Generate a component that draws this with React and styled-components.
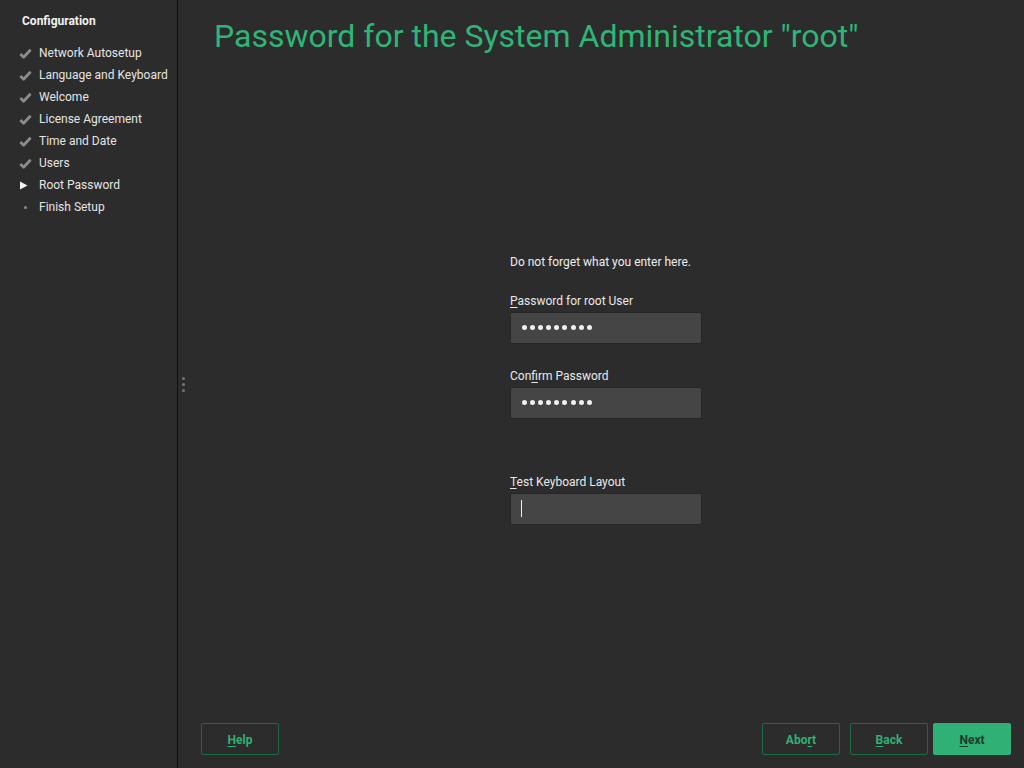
import React from "react";
import styled, { createGlobalStyle } from "styled-components";

const Global = createGlobalStyle`
  html, body { margin: 0; padding: 0; background: #2c2c2c; }
  body { font-family: Roboto, "Liberation Sans", sans-serif; color: #e6e6e6; }
  * { box-sizing: border-box; }
`;

const Shell = styled.div`
  display: flex;
  width: 1024px;
  height: 768px;
  background: #2c2c2c;
  overflow: hidden;
`;

const Sidebar = styled.nav`
  width: 178px;
  flex: none;
  border-right: 1px solid #0f0f0f;
  padding: 13px 0 0 0;
`;

const SideTitle = styled.div`
  font-size: 12px;
  font-weight: 700;
  color: #f2f2f2;
  padding-left: 22px;
  height: 16px;
  line-height: 16px;
  margin-bottom: 13px;
`;

const StepList = styled.ul`
  list-style: none;
  margin: 0;
  padding: 0;
`;

const Step = styled.li`
  display: flex;
  align-items: center;
  height: 22px;
  font-size: 12px;
  color: #e4e4e4;
`;

const StepIcon = styled.span`
  width: 39px;
  padding-left: 19px;
  display: flex;
  align-items: center;
`;

const Dot = styled.span`
  width: 3px;
  height: 3px;
  border-radius: 50%;
  background: #8a8a8a;
  margin-left: 5px;
`;

const Handle = styled.div`
  width: 10px;
  flex: none;
  display: flex;
  flex-direction: column;
  justify-content: center;
  align-items: center;
  gap: 3px;
`;

const HandleDot = styled.span`
  width: 3px;
  height: 3px;
  border-radius: 50%;
  background: #777;
`;

const Main = styled.main`
  flex: 1;
  display: flex;
  flex-direction: column;
  padding: 15px 13px 13px 13px;
`;

const Title = styled.h1`
  margin: 0 0 0 13px;
  font-weight: 400;
  font-size: 32px;
  line-height: 42px;
  color: #30b478;
  letter-spacing: 0;
`;

const Center = styled.div`
  flex: 1;
  display: flex;
  align-items: center;
  justify-content: center;
`;

const Form = styled.div`
  width: 192px;
  display: flex;
  flex-direction: column;
  margin-top: -2px;
`;

const Note = styled.div`
  font-size: 12px;
  line-height: 16px;
  color: #ececec;
  margin-bottom: 23px;
`;

const Label = styled.div`
  font-size: 12px;
  line-height: 16px;
  color: #e8e8e8;
  margin-bottom: 3px;
`;

const U = styled.span`
  text-decoration: underline;
  text-underline-offset: 2px;
`;

const Field = styled.div`
  height: 32px;
  background: #454545;
  border: 1px solid #262626;
  border-radius: 2px;
  display: flex;
  align-items: center;
  padding-left: 11px;
  margin-bottom: ${(p) => p.$gap || 0}px;
`;

const Dots = styled.span`
  display: flex;
  gap: 3.1px;
`;

const PwDot = styled.span`
  width: 5px;
  height: 5px;
  border-radius: 50%;
  background: #f0f0f0;
`;

const Caret = styled.span`
  width: 1px;
  height: 17px;
  background: #f0f0f0;
  margin-left: -1px;
`;

const Bar = styled.div`
  display: flex;
  align-items: center;
  gap: 10px;
`;

const Spacer = styled.div`
  flex: 1;
`;

const Button = styled.button`
  width: 78px;
  height: 32px;
  border-radius: 2px;
  font-family: Roboto, "Liberation Sans", sans-serif;
  font-weight: 700;
  font-size: 12px;
  cursor: pointer;
  padding: 2px 0 0 0;
  background: ${(p) => (p.$primary ? "#2fb075" : "transparent")};
  color: ${(p) => (p.$primary ? "#1f3a2c" : "#2fb075")};
  border: 1px solid ${(p) => (p.$primary ? "#2fb075" : "#1d6a47")};
  margin-left: ${(p) => p.$ml || 0}px;
`;

const Check = () => (
  <svg width="13" height="11" viewBox="0 0 13 11">
    <path d="M1.4 6 L4.6 9.2 L11.6 1.8" fill="none" stroke="#8c8c8c" strokeWidth="2.8" strokeLinejoin="round" />
  </svg>
);

const Arrow = () => (
  <svg width="9" height="9" viewBox="0 0 9 9">
    <path d="M1 0.5 L8.5 4.5 L1 8.5 Z" fill="#f4f4f4" />
  </svg>
);

const steps = [
  ["done", "Network Autosetup"],
  ["done", "Language and Keyboard"],
  ["done", "Welcome"],
  ["done", "License Agreement"],
  ["done", "Time and Date"],
  ["done", "Users"],
  ["current", "Root Password"],
  ["todo", "Finish Setup"],
];

const PwDots = () => (
  <Dots>
    {Array.from({ length: 9 }).map((_, i) => (
      <PwDot key={i} />
    ))}
  </Dots>
);

export default function App() {
  return (
    <>
      <Global />
      <Shell>
        <Sidebar>
          <SideTitle>Configuration</SideTitle>
          <StepList>
            {steps.map(([state, name]) => (
              <Step key={name}>
                <StepIcon>
                  {state === "done" ? <Check /> : state === "current" ? <Arrow /> : <Dot />}
                </StepIcon>
                {name}
              </Step>
            ))}
          </StepList>
        </Sidebar>
        <Handle>
          <HandleDot />
          <HandleDot />
          <HandleDot />
        </Handle>
        <Main>
          <Title>Password for the System Administrator "root"</Title>
          <Center>
            <Form>
              <Note>Do not forget what you enter here.</Note>
              <Label>
                <U>P</U>assword for root User
              </Label>
              <Field $gap={24}>
                <PwDots />
              </Field>
              <Label>
                Con<U>f</U>irm Password
              </Label>
              <Field $gap={55}>
                <PwDots />
              </Field>
              <Label>
                <U>T</U>est Keyboard Layout
              </Label>
              <Field>
                <Caret />
              </Field>
            </Form>
          </Center>
          <Bar>
            <Button>
              <U>H</U>elp
            </Button>
            <Spacer />
            <Button>
              Abo<U>r</U>t
            </Button>
            <Button>
              <U>B</U>ack
            </Button>
            <Button $primary $ml={-5}>
              <U>N</U>ext
            </Button>
          </Bar>
        </Main>
      </Shell>
    </>
  );
}
